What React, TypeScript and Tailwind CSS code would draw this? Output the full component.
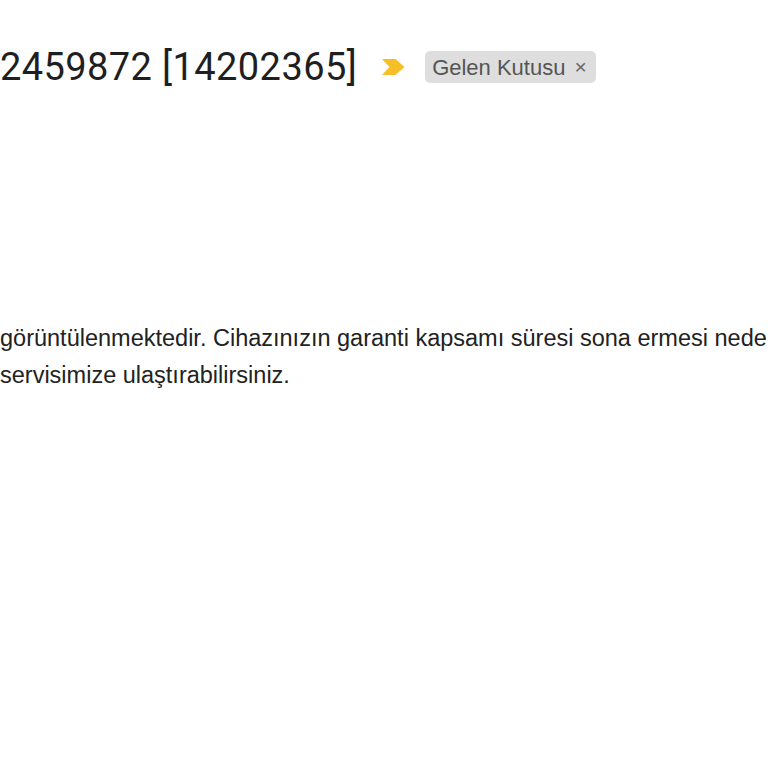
import React from "react";

export default function App() {
  return (
    <div className="w-[768px] h-[768px] bg-white overflow-hidden relative">
      <div className="flex items-center pt-[44px] h-[90px]">
        <h1
          className="whitespace-nowrap text-[38px] tracking-[0.4px] leading-[46px] text-[#1f1f1f] font-normal"
          style={{ fontFamily: "Roboto, 'Open Sans', sans-serif" }}
        >
          2459872 [14202365]
        </h1>
        <svg width="25" height="20" viewBox="0 0 25 20" className="ml-[24px] shrink-0">
          <path d="M1 2 H14.5 L23.5 10 L14.5 18 H1 L8.5 10 Z" fill="#f6bf26" />
        </svg>
        <div
          className="ml-[19px] flex items-center h-[32px] rounded-[5px] bg-[#dedede] pl-[7px] pr-[9px] text-[22px] text-[#555555]"
          style={{ fontFamily: "'Liberation Sans', Arial, sans-serif" }}
        >
          <span>Gelen Kutusu</span>
          <span className="ml-[9px] text-[21px] text-[#666666]">×</span>
        </div>
      </div>
      <div
        className="mt-[230px] text-[23.5px] leading-[37px] text-[#222222] whitespace-nowrap"
        style={{ fontFamily: "'Liberation Sans', Arial, sans-serif" }}
      >
        <div>görüntülenmektedir. Cihazınızın garanti kapsamı süresi sona ermesi nede</div>
        <div>servisimize ulaştırabilirsiniz.</div>
      </div>
    </div>
  );
}
